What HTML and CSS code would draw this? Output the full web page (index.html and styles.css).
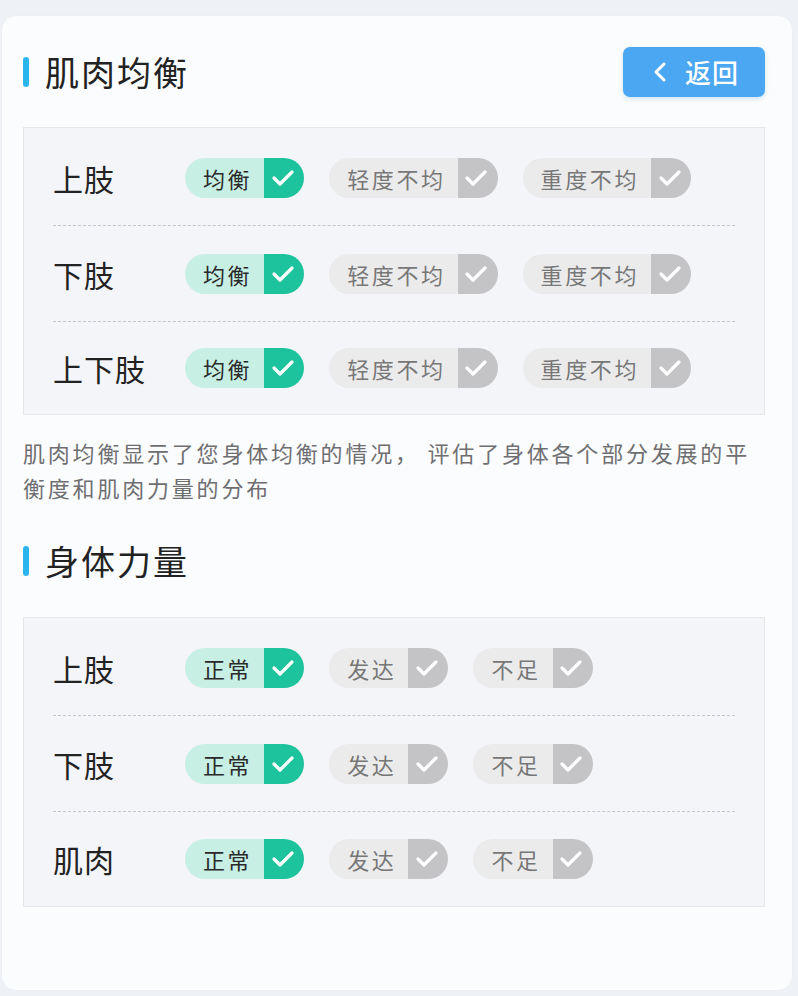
FILE: index.html
```html
<!DOCTYPE html>
<html lang="zh-CN">
<head>
<meta charset="utf-8">
<link rel="stylesheet" href="styles.css">
</head>
<body>
<div class="page">
  <div class="card">
    <div class="head">
      <h2 class="title"><span class="bar"></span>肌肉均衡</h2>
      <button class="back">
        <svg class="chev" width="14" height="22" viewBox="0 0 14 22"><path d="M11 3 L3 11 L11 19" fill="none" stroke="#fff" stroke-width="3" stroke-linecap="round" stroke-linejoin="round"/></svg>
        <span>返回</span>
      </button>
    </div>

    <div class="panel">
      <div class="row">
        <div class="label">上肢</div>
        <div class="pill on"><span class="txt">均衡</span><span class="chk"><svg width="26" height="20" viewBox="0 0 26 20"><path d="M4 10 L10 16 L22 4" fill="none" stroke="#fff" stroke-width="3.2" stroke-linecap="round" stroke-linejoin="round"/></svg></span></div>
        <div class="pill"><span class="txt">轻度不均</span><span class="chk"><svg width="26" height="20" viewBox="0 0 26 20"><path d="M4 10 L10 16 L22 4" fill="none" stroke="#fff" stroke-width="3.2" stroke-linecap="round" stroke-linejoin="round"/></svg></span></div>
        <div class="pill"><span class="txt">重度不均</span><span class="chk"><svg width="26" height="20" viewBox="0 0 26 20"><path d="M4 10 L10 16 L22 4" fill="none" stroke="#fff" stroke-width="3.2" stroke-linecap="round" stroke-linejoin="round"/></svg></span></div>
      </div>
      <div class="row">
        <div class="label">下肢</div>
        <div class="pill on"><span class="txt">均衡</span><span class="chk"><svg width="26" height="20" viewBox="0 0 26 20"><path d="M4 10 L10 16 L22 4" fill="none" stroke="#fff" stroke-width="3.2" stroke-linecap="round" stroke-linejoin="round"/></svg></span></div>
        <div class="pill"><span class="txt">轻度不均</span><span class="chk"><svg width="26" height="20" viewBox="0 0 26 20"><path d="M4 10 L10 16 L22 4" fill="none" stroke="#fff" stroke-width="3.2" stroke-linecap="round" stroke-linejoin="round"/></svg></span></div>
        <div class="pill"><span class="txt">重度不均</span><span class="chk"><svg width="26" height="20" viewBox="0 0 26 20"><path d="M4 10 L10 16 L22 4" fill="none" stroke="#fff" stroke-width="3.2" stroke-linecap="round" stroke-linejoin="round"/></svg></span></div>
      </div>
      <div class="row last">
        <div class="label">上下肢</div>
        <div class="pill on"><span class="txt">均衡</span><span class="chk"><svg width="26" height="20" viewBox="0 0 26 20"><path d="M4 10 L10 16 L22 4" fill="none" stroke="#fff" stroke-width="3.2" stroke-linecap="round" stroke-linejoin="round"/></svg></span></div>
        <div class="pill"><span class="txt">轻度不均</span><span class="chk"><svg width="26" height="20" viewBox="0 0 26 20"><path d="M4 10 L10 16 L22 4" fill="none" stroke="#fff" stroke-width="3.2" stroke-linecap="round" stroke-linejoin="round"/></svg></span></div>
        <div class="pill"><span class="txt">重度不均</span><span class="chk"><svg width="26" height="20" viewBox="0 0 26 20"><path d="M4 10 L10 16 L22 4" fill="none" stroke="#fff" stroke-width="3.2" stroke-linecap="round" stroke-linejoin="round"/></svg></span></div>
      </div>
    </div>

    <p class="desc">肌肉均衡显示了您身体均衡的情况， 评估了身体各个部分发展的平衡度和肌肉力量的分布</p>

    <h2 class="title title2"><span class="bar"></span>身体力量</h2>

    <div class="panel panel2">
      <div class="row">
        <div class="label">上肢</div>
        <div class="pill on"><span class="txt">正常</span><span class="chk"><svg width="26" height="20" viewBox="0 0 26 20"><path d="M4 10 L10 16 L22 4" fill="none" stroke="#fff" stroke-width="3.2" stroke-linecap="round" stroke-linejoin="round"/></svg></span></div>
        <div class="pill"><span class="txt">发达</span><span class="chk"><svg width="26" height="20" viewBox="0 0 26 20"><path d="M4 10 L10 16 L22 4" fill="none" stroke="#fff" stroke-width="3.2" stroke-linecap="round" stroke-linejoin="round"/></svg></span></div>
        <div class="pill"><span class="txt">不足</span><span class="chk"><svg width="26" height="20" viewBox="0 0 26 20"><path d="M4 10 L10 16 L22 4" fill="none" stroke="#fff" stroke-width="3.2" stroke-linecap="round" stroke-linejoin="round"/></svg></span></div>
      </div>
      <div class="row">
        <div class="label">下肢</div>
        <div class="pill on"><span class="txt">正常</span><span class="chk"><svg width="26" height="20" viewBox="0 0 26 20"><path d="M4 10 L10 16 L22 4" fill="none" stroke="#fff" stroke-width="3.2" stroke-linecap="round" stroke-linejoin="round"/></svg></span></div>
        <div class="pill"><span class="txt">发达</span><span class="chk"><svg width="26" height="20" viewBox="0 0 26 20"><path d="M4 10 L10 16 L22 4" fill="none" stroke="#fff" stroke-width="3.2" stroke-linecap="round" stroke-linejoin="round"/></svg></span></div>
        <div class="pill"><span class="txt">不足</span><span class="chk"><svg width="26" height="20" viewBox="0 0 26 20"><path d="M4 10 L10 16 L22 4" fill="none" stroke="#fff" stroke-width="3.2" stroke-linecap="round" stroke-linejoin="round"/></svg></span></div>
      </div>
      <div class="row last">
        <div class="label">肌肉</div>
        <div class="pill on"><span class="txt">正常</span><span class="chk"><svg width="26" height="20" viewBox="0 0 26 20"><path d="M4 10 L10 16 L22 4" fill="none" stroke="#fff" stroke-width="3.2" stroke-linecap="round" stroke-linejoin="round"/></svg></span></div>
        <div class="pill"><span class="txt">发达</span><span class="chk"><svg width="26" height="20" viewBox="0 0 26 20"><path d="M4 10 L10 16 L22 4" fill="none" stroke="#fff" stroke-width="3.2" stroke-linecap="round" stroke-linejoin="round"/></svg></span></div>
        <div class="pill"><span class="txt">不足</span><span class="chk"><svg width="26" height="20" viewBox="0 0 26 20"><path d="M4 10 L10 16 L22 4" fill="none" stroke="#fff" stroke-width="3.2" stroke-linecap="round" stroke-linejoin="round"/></svg></span></div>
      </div>
    </div>
  </div>
</div>
</body>
</html>
```

FILE: styles.css
```css
* { box-sizing: border-box; }
html, body {
  margin: 0;
  padding: 0;
  background: #eef1f5;
}
body {
  font-family: "Noto Sans CJK SC", "Noto Sans", sans-serif;
  color: #222;
}
.page {
  width: 798px;
  height: 996px;
  padding: 16px 6px 6px 2px;
}
.card {
  height: 974px;
  background: #fbfcfd;
  border-radius: 14px;
  padding: 31px 27px 0 21px;
  box-shadow: 0 0 2px rgba(0,0,0,0.04);
}
.head {
  display: flex;
  justify-content: space-between;
  align-items: center;
  height: 50px;
}
.title {
  display: flex;
  align-items: center;
  margin: 0;
  font-size: 34px;
  font-weight: 400;
  line-height: 50px;
  color: #222;
  letter-spacing: 2px;
}
.bar {
  display: inline-block;
  width: 6px;
  height: 30px;
  border-radius: 3px;
  background: #2bb5ef;
  margin: 0 16px 0 0;
}
.back {
  width: 142px;
  height: 50px;
  border: none;
  border-radius: 7px;
  background: #4ba7f1;
  color: #fff;
  display: flex;
  align-items: center;
  justify-content: center;
  gap: 18px;
  font-family: inherit;
  font-size: 26px;
  font-weight: 500;
  letter-spacing: 1px;
  padding: 0 0 0 4px;
  box-shadow: 0 2px 4px rgba(75,167,241,0.25);
}
.back span { line-height: 1; }
.panel {
  margin-top: 30px;
  background: #f3f5f8;
  border: 1px solid #e4e8ec;
  padding: 2px 29px 0;
}
.row {
  display: flex;
  align-items: center;
  height: 96px;
  border-bottom: 1px dashed #c3c7cd;
}
.row.last {
  height: 92px;
  border-bottom: none;
}
.label {
  width: 132px;
  font-size: 30px;
  color: #222;
  letter-spacing: 1px;
}
.pill {
  display: flex;
  height: 40px;
  margin-right: 25px;
}
.txt {
  display: flex;
  align-items: center;
  height: 40px;
  padding: 0 12px 0 18px;
  background: #ebebec;
  border-radius: 20px 0 0 20px;
  font-size: 22px;
  letter-spacing: 2.6px;
  color: #777;
}
.chk {
  width: 40px;
  height: 40px;
  background: #c4c4c6;
  border-radius: 0 20px 20px 0;
  display: flex;
  align-items: center;
  justify-content: center;
  padding-right: 3px;
}
.pill.on .txt {
  background: #c7efe4;
  color: #2a2a2a;
}
.pill.on .chk {
  background: #1cc39c;
}
.desc {
  margin: 20px 0 0 0;
  font-size: 22px;
  line-height: 35px;
  color: #6f6f72;
  letter-spacing: 2.8px;
}
.title2 {
  margin-top: 31px;
}
.panel2 {
  margin-top: 31px;
}
.panel2 .row.last {
  height: 94px;
}
```
